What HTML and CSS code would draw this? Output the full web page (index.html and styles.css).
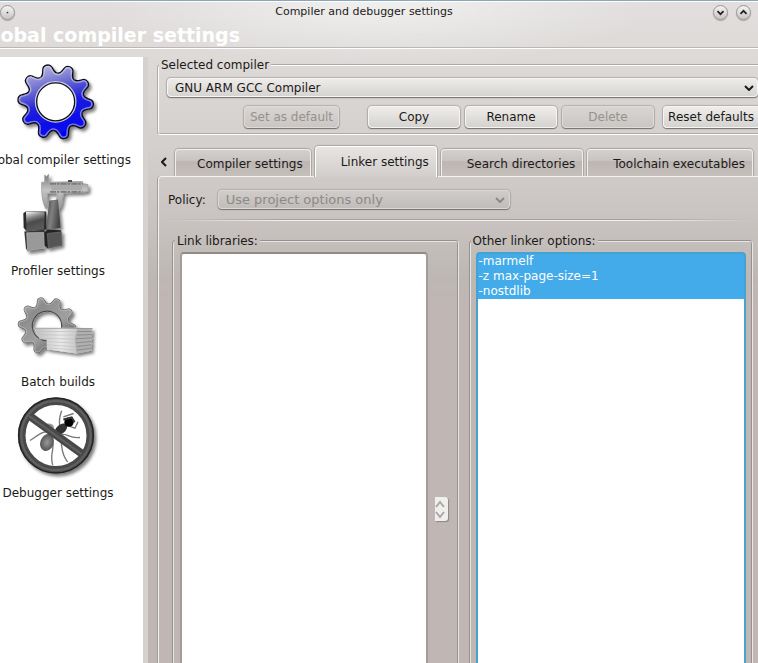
FILE: index.html
```html
<!DOCTYPE html>
<html lang="en">
<head>
<meta charset="utf-8">
<title>Compiler and debugger settings</title>
<link rel="stylesheet" href="styles.css">
</head>
<body>
<div class="window">
  <header class="header">
    <div class="titlebar">
      <button class="orb" aria-label="Window menu"><svg viewBox="0 0 15 15"><circle cx="7.500" cy="7.500" r="1" fill="#333"/></svg></button>
      <span class="title">Compiler and debugger settings</span>
      <div class="orbs">
        <button class="orb" aria-label="Minimize"><svg viewBox="0 0 15 15"><path d="M4 6 L7.500 9.500 L11 6"/></svg></button>
        <button class="orb" aria-label="Maximize"><svg viewBox="0 0 15 15"><path d="M4 9 L7.500 5.500 L11 9"/></svg></button>
      </div>
    </div>
    <h1 class="heading">Global compiler settings</h1>
  </header>

  <div class="body">
    <nav class="sidebar">
      <a class="category" href="#global">
        <svg viewBox="42 3 264 282" aria-hidden="true">
          <defs>
            <path id="tooth" d="M-26,-80 C-16,-83 -15,-93 -12,-103 C-9,-114 9,-114 12,-103 C15,-93 16,-83 26,-80"/>
            <path id="wedge" d="M0,0 L-26,-80 C-16,-83 -15,-93 -12,-103 C-9,-114 9,-114 12,-103 C15,-93 16,-83 26,-80 Z"/>
            <g id="rim">
              <use href="#tooth"/><use href="#tooth" transform="rotate(36)"/><use href="#tooth" transform="rotate(72)"/><use href="#tooth" transform="rotate(108)"/><use href="#tooth" transform="rotate(144)"/><use href="#tooth" transform="rotate(180)"/><use href="#tooth" transform="rotate(216)"/><use href="#tooth" transform="rotate(252)"/><use href="#tooth" transform="rotate(288)"/><use href="#tooth" transform="rotate(324)"/>
            </g>
            <clipPath id="gearShape">
              <circle r="79"/>
              <use href="#wedge"/><use href="#wedge" transform="rotate(36)"/><use href="#wedge" transform="rotate(72)"/><use href="#wedge" transform="rotate(108)"/><use href="#wedge" transform="rotate(144)"/><use href="#wedge" transform="rotate(180)"/><use href="#wedge" transform="rotate(216)"/><use href="#wedge" transform="rotate(252)"/><use href="#wedge" transform="rotate(288)"/><use href="#wedge" transform="rotate(324)"/>
            </clipPath>
            <linearGradient id="blue" x1="0.300" y1="0" x2="0.600" y2="1">
              <stop offset="0.050" stop-color="#b4b4e0"/><stop offset="0.300" stop-color="#6c6cd0"/><stop offset="0.550" stop-color="#1c1cdc"/><stop offset="1" stop-color="#0000f4"/>
            </linearGradient>
            <linearGradient id="steel" x1="0" y1="0" x2="0.800" y2="1">
              <stop offset="0" stop-color="#c4c4c4"/><stop offset="0.300" stop-color="#8c8c8c"/><stop offset="0.600" stop-color="#a0a0a0"/><stop offset="1" stop-color="#4c4c4c"/>
            </linearGradient>
            <filter id="shadow" x="-20%" y="-20%" width="150%" height="150%">
              <feDropShadow dx="7" dy="8" stdDeviation="4" flood-color="#000" flood-opacity="0.500"/>
            </filter>
          </defs>
          <g filter="url(#shadow)">
            <g transform="translate(167 136) rotate(-14)">
              <use href="#rim" fill="none" stroke="#111" stroke-width="8"/>
              <g clip-path="url(#gearShape)">
                <rect x="-115" y="-115" width="230" height="230" fill="url(#blue)" transform="rotate(14)"/>
                <use href="#rim" fill="none" stroke="#e4e4fa" stroke-width="9" opacity="0.500"/>
              </g>
            </g>
          </g>
          <circle cx="167" cy="136" r="59" fill="#fff" stroke="#c9c9f6" stroke-width="7"/>
          <circle cx="167" cy="136" r="57" fill="#fff" stroke="#111" stroke-width="4"/>
        </svg>
        <span>Global compiler settings</span>
      </a>
      <a class="category" href="#profiler">
        <svg viewBox="42 9 264 282" aria-hidden="true">
          <defs>
            <linearGradient id="caliper" x1="0" y1="0" x2="0" y2="1"><stop offset="0" stop-color="#777"/><stop offset="0.450" stop-color="#c4c4c4"/><stop offset="1" stop-color="#969696"/></linearGradient>
            <linearGradient id="cubeA" x1="0" y1="0" x2="0.300" y2="1"><stop offset="0" stop-color="#fff"/><stop offset="0.350" stop-color="#888"/><stop offset="0.600" stop-color="#4c4c4c"/><stop offset="1" stop-color="#5a5a5a"/></linearGradient>
            <linearGradient id="cone" x1="0" y1="0" x2="1" y2="0.300"><stop offset="0" stop-color="#444"/><stop offset="0.500" stop-color="#808080"/><stop offset="1" stop-color="#444"/></linearGradient>
          </defs>
          <g filter="url(#shadow)">
            <path d="M134,50 L134,28 L139,34 L146,26 L146,50 L247,48 L249,55 L264,57 L264,77 L249,80 L192,82 C185,100 188,120 176,132 L169,128 L171,84 L142,84 L143,128 L138,130 C126,110 124,80 125,50 Z" fill="url(#caliper)" stroke="#999" stroke-width="2"/>
            <path d="M150,55 H248 M150,79 H248" stroke="#7c7c7c" stroke-width="5" stroke-dasharray="18 3 7 4"/>
            <path d="M154,67 H245" stroke="#aaa" stroke-width="16"/>
            <path d="M204,44 h12 v5 h-12z" fill="#333"/>
            <path d="M148,105 L174,102 L182,187 L137,195 Z" fill="url(#cone)"/>
            <path d="M70,143 L77,138 H139 V192 L78,196 L71,186 Z" fill="#292929"/>
            <path d="M78,139 L134,140 L132,192 L79,195 Z" fill="url(#cubeA)"/>
            <path d="M73,198 L133,193 L135,202 L131,251 L83,257 L78,249 Z" fill="#343434"/>
            <path d="M80,202 L131,201 V249 L83,256 Z" fill="#999" stroke="#bbb" stroke-width="2"/>
            <path d="M134,200 L143,192 L183,194 L186,239 L143,249 L134,240 Z" fill="#242424"/>
            <path d="M142,204 L185,199 L184,238 L145,248 Z" fill="#555" stroke="#707070" stroke-width="2"/>
          </g>
        </svg>
        <span>Profiler settings</span>
      </a>
      <a class="category" href="#batch">
        <svg viewBox="42 -19 264 282" aria-hidden="true">
          <defs>
            <linearGradient id="paper" x1="0" y1="0" x2="1" y2="0"><stop offset="0" stop-color="#bdbdbd"/><stop offset="0.600" stop-color="#e8e8e8"/><stop offset="1" stop-color="#c4c4c4"/></linearGradient>
            <mask id="ring" maskUnits="userSpaceOnUse" x="-130" y="-130" width="270" height="270"><rect x="-130" y="-130" width="270" height="270" fill="#fff"/><circle r="55" fill="#000"/></mask>
            <clipPath id="gearCut"><path d="M30,20 H250 V126 H140 V210 H30 Z"/></clipPath>
          </defs>
          <g filter="url(#shadow)">
            <g clip-path="url(#gearCut)">
              <g transform="translate(141 120) scale(0.770) rotate(-14)" mask="url(#ring)">
                <use href="#rim" fill="none" stroke="#666" stroke-width="6"/>
                <g clip-path="url(#gearShape)">
                  <rect x="-115" y="-115" width="230" height="230" fill="url(#steel)" transform="rotate(14)"/>
                  <use href="#rim" fill="none" stroke="#ddd" stroke-width="8" opacity="0.400"/>
                </g>
                <circle r="57" fill="none" stroke="#4a4a4a" stroke-width="5"/>
              </g>
            </g>
            <path d="M104,127 L235,126 L230,203 L141,190 L140,161 L119,160 Z" fill="url(#paper)"/>
            <path d="M232,126 L278,128 L274,136 L278,142 L274,150 L277,158 L273,166 L277,174 L273,182 L275,194 L230,203 L224,160 Z" fill="#b0b0b0"/>
            <path d="M108,137 H226 M113,147 L226,148 M118,157 L226,160 M142,167 L226,172 M142,177 L228,183 M142,186 L228,193" stroke="#c0c0c0" stroke-width="2" fill="none"/>
            <path d="M232,137 H276 M230,148 L276,146 M228,159 L276,156 M228,171 L275,167 M230,182 L275,177 M230,193 L275,187" stroke="#8c8c8c" stroke-width="3" fill="none"/>
            <path d="M104,127 L278,128" stroke="#888" stroke-width="2"/>
          </g>
        </svg>
        <span>Batch builds</span>
      </a>
      <a class="category" href="#debugger">
        <svg viewBox="42 -1 264 282" aria-hidden="true">
          <defs>
            <filter id="soft"><feGaussianBlur stdDeviation="2"/></filter>
            <radialGradient id="abdomen"><stop offset="0" stop-color="#999"/><stop offset="1" stop-color="#555"/></radialGradient>
          </defs>
          <circle cx="168" cy="134" r="103" fill="#fff" stroke="#484848" stroke-width="23" filter="url(#shadow)"/>
          <circle cx="168" cy="134" r="112" fill="none" stroke="#222" stroke-width="4"/>
          <circle cx="168" cy="134" r="104" fill="none" stroke="#606060" stroke-width="7" filter="url(#soft)"/>
          <g filter="url(#soft)">
            <g fill="none" stroke="#777" stroke-width="4">
              <path d="M160,120 C130,118 112,135 90,149 M158,150 C165,175 148,188 158,222 M180,140 C190,165 178,180 203,214 M186,130 C205,130 208,143 240,140 M180,110 C175,85 180,75 185,60 M190,78 L221,68 M205,105 L225,112 L234,93"/>
            </g>
            <ellipse cx="141" cy="155" rx="20" ry="26" fill="url(#abdomen)" transform="rotate(20 141 155)"/>
            <ellipse cx="145" cy="109" rx="17" ry="11" fill="#999"/>
            <ellipse cx="183" cy="115" rx="22" ry="13" fill="#333" transform="rotate(-40 183 115)"/>
            <circle cx="207" cy="94" r="14" fill="#050505"/>
            <path d="M190,86 L215,80 L224,94" fill="none" stroke="#333" stroke-width="6"/>
          </g>
          <path d="M90,76 L246,189" stroke="#484848" stroke-width="24"/>
          <path d="M88,76 L244,189" stroke="#606060" stroke-width="7" filter="url(#soft)"/>
        </svg>
        <span>Debugger settings</span>
      </a>
    </nav>

    <main class="content">
      <fieldset class="group compiler">
        <legend>Selected compiler</legend>
        <div class="combo">
          <select aria-label="Selected compiler"><option>GNU ARM GCC Compiler</option></select>
          <svg viewBox="0 0 10 6" aria-hidden="true"><path d="M1 1 L5 5 L9 1"/></svg>
        </div>
        <div class="actions">
          <button class="button wide" disabled>Set as default</button>
          <button class="button spaced">Copy</button>
          <button class="button">Rename</button>
          <button class="button" disabled>Delete</button>
          <button class="button wide last">Reset defaults</button>
        </div>
      </fieldset>

      <div class="tabs" role="tablist">
        <button class="scroll" aria-label="Scroll tabs left"><svg viewBox="0 0 6 10"><path d="M5 1 L1 5 L5 9"/></svg></button>
        <button class="tab first" role="tab">Compiler settings</button>
        <button class="tab active" role="tab" aria-selected="true">Linker settings</button>
        <button class="tab" role="tab">Search directories</button>
        <button class="tab" role="tab">Toolchain executables</button>
      </div>

      <section class="pane">
        <div class="policy">
          <label for="policy">Policy:</label>
          <div class="combo disabled">
            <select id="policy" disabled><option>Use project options only</option></select>
            <svg viewBox="0 0 10 6" aria-hidden="true"><path d="M1 1 L5 5 L9 1"/></svg>
          </div>
        </div>
        <hr class="rule">
        <div class="columns">
          <fieldset class="group libraries">
            <legend>Link libraries:</legend>
            <div class="listrow">
              <select class="field" multiple aria-label="Link libraries"></select>
              <button class="stepper" aria-label="Move library up or down"><svg viewBox="0 0 12 24"><path d="M1 10 L5 5 L9 10 M1 15 L5 20 L9 15"/></svg></button>
            </div>
          </fieldset>
          <fieldset class="group options">
            <legend>Other linker options:</legend>
            <textarea class="field focused" spellcheck="false" aria-label="Other linker options">-marmelf
-z max-page-size=1
-nostdlib</textarea>
          </fieldset>
        </div>
      </section>
    </main>
  </div>
</div>
</body>
</html>
```
FILE: styles.css
```css
* { box-sizing: border-box; }

body {
  margin: 0;
  font: 12px/16px "DejaVu Sans", sans-serif;
  color: #1c1a19;
}

button, select, textarea { font: inherit; color: inherit; }

.window {
  display: flex;
  flex-direction: column;
  height: 100vh;
  overflow: hidden;
  border-top: 1px solid #8aa7ba;
  background:
    radial-gradient(ellipse 280px 64px at 50% 0, #f0f0ef, rgba(240, 240, 239, 0)),
    linear-gradient(#e1dedd, #dcd9d7 64px, #d3cfcc 150px, #c8c3c0 220px, #bdb7b3 280px, #c0b6b3 300px);
}

.header {
  height: 48px;
  border-top: 1px solid #fff;
  border-bottom: 1px solid #fff;
  box-shadow: inset 0 -1px #bcb6b4;
}

.titlebar {
  display: flex;
  align-items: center;
  justify-content: space-between;
  height: 20px;
  padding-right: 7px;
  font-size: 11px;
}

.title { flex: 1; text-align: center; }

.orbs { display: flex; gap: 8px; }

.orb {
  width: 15px;
  height: 15px;
  padding: 0;
  border: 1px solid #999593;
  border-radius: 50%;
  background: linear-gradient(#f5f4f3, #c8c5c3);
  box-shadow: 0 1px 1px #aaa5a3;
}

svg { display: block; }

.orb svg { width: 13px; height: 13px; }

.orb path { fill: none; stroke: #222; stroke-width: 2; }

.heading {
  display: flex;
  justify-content: flex-end;
  width: 240px;
  margin: 0;
  font-size: 19px;
  line-height: 26px;
  color: #fff;
  white-space: nowrap;
}

.body { display: flex; flex: 1; min-height: 0; padding-top: 8px; }

.sidebar {
  flex: none;
  width: 148px;
  padding-right: 27px;
  border-right: 5px solid #d4d1ce;
  background: #fff;
}

.category {
  display: flex;
  flex-direction: column;
  align-items: center;
  color: inherit;
  text-decoration: none;
  white-space: nowrap;
}

.category svg { width: 88px; height: 95px; }

.content {
  display: flex;
  flex: 1;
  flex-direction: column;
  min-width: 0;
  padding-left: 9px;
}

.group {
  min-width: 0;
  margin: 0;
  border: 2px groove #fff;
  border-radius: 4px;
}

.group legend { margin-left: -5px; padding: 0 2px; }

.compiler { padding: 5px 0 5px 8px; border-right: 0; border-radius: 4px 0 0 4px; }

.compiler legend { margin-left: -8px; }

.combo { position: relative; }

.combo select {
  display: block;
  width: 100%;
  height: 19px;
  padding: 0 7px;
  appearance: none;
  border: 1px solid #f6f5f4;
  border-radius: 4px;
  outline: 0;
  background: linear-gradient(#edecea, #d6d4d1);
  box-shadow: 0 1px 1px #777371, 0 0 1px 1px #b5b0ae;
}

.combo svg { position: absolute; top: 7px; right: 4px; width: 10px; height: 6px; }

.combo path, .scroll path { fill: none; stroke: #1c1a19; stroke-width: 2; }

.combo.disabled select {
  font-size: 13px;
  color: #8d8986;
  opacity: 1;
  border-color: #dad7d5;
  background: linear-gradient(#cfccca, #c1bdba);
}

.combo.disabled svg { right: 5px; }

.combo.disabled path { stroke: #8d8986; }

.actions { display: flex; justify-content: flex-end; gap: 5px; padding-top: 9px; }

.button {
  width: 92px;
  height: 22px;
  padding: 0;
  border: 1px solid #f6f5f4;
  border-radius: 4px;
  background: linear-gradient(#eeedeb, #d5d3d0);
  box-shadow: 0 1px 1px #777371, 0 0 1px 1px #b5b0ae;
  white-space: nowrap;
}

.button:disabled { color: #96928f; border-color: #dedbd9; background: linear-gradient(#d8d5d3, #cac6c3); }

.button.wide { width: 95px; }

.button.spaced { margin-left: 24px; }

.button.last { margin-left: 4px; border-right: 0; border-radius: 4px 0 0 4px; }

.tabs { display: flex; align-items: flex-end; gap: 4px; height: 31px; margin: 11px 5px -1px 0; }

.scroll {
  align-self: center;
  width: 14px;
  height: 14px;
  padding: 2px 4px;
  border: 0;
  background: none;
}

.scroll svg { width: 6px; height: 10px; }

.tab {
  flex: 1 0 auto;
  height: 27px;
  margin-bottom: 1px;
  padding: 2px 7px 0 21px;
  border: 1px solid #f0eeed;
  border-bottom: 0;
  border-radius: 4px 4px 0 0;
  background: linear-gradient(#d3d0cd, #c8c4c1 40%, #bdb6b3 45%, #c5bfbc);
  box-shadow: 0 0 1px 1px #aaa5a3;
  text-align: right;
  white-space: nowrap;
  clip-path: inset(-2px -2px 0 -2px);
}

.tab.first { flex-grow: 0; }

.tab.active {
  position: relative;
  height: 31px;
  margin-bottom: 0;
  padding-top: 0;
  border-color: #fff;
  background: linear-gradient(#e7e5e3, #d1cdca);
}

.pane {
  display: flex;
  flex: 1;
  flex-direction: column;
  min-height: 0;
  margin-left: 1px;
  padding: 13px 5px 0 8px;
  border: solid #f5f3f2;
  border-width: 1px 0 0 1px;
  border-radius: 4px 0 0 0;
  box-shadow: -1px 0 #a29c99;
}

.policy { display: flex; align-items: center; gap: 12px; padding-left: 1px; }

.policy .combo { width: 292px; }

.rule {
  width: 100%;
  height: 2px;
  margin: 10px 0 0;
  border: 0;
  background:
    linear-gradient(90deg, transparent, #a7a19e 20%, #a7a19e 80%, transparent) top / 100% 1px no-repeat,
    linear-gradient(90deg, transparent, #f3f1f0 20%, #f3f1f0 80%, transparent) bottom / 100% 1px no-repeat;
}

.columns { display: flex; flex: 1; gap: 10px; min-height: 0; padding: 12px 0 0 5px; }

.columns .group {
  flex: 1;
  height: 100%;
  padding: 3px 5px 0;
  border-bottom: 0;
  border-color: #e8e5e3;
  border-radius: 4px 4px 0 0;
}

.columns .libraries { padding: 3px 6px 0; }

.listrow { display: flex; align-items: center; gap: 7px; height: 100%; }

.field {
  display: block;
  width: 100%;
  min-width: 0;
  height: 100%;
  margin: 0;
  padding: 0 1px;
  border: 2px solid #a39c99;
  border-top-color: #918a87;
  border-bottom: 0;
  border-radius: 4px 4px 0 0;
  outline: 0;
  background: #fff;
  resize: none;
}

.listrow .field { flex: 1; }

.field.focused {
  border-color: #45a2d3;
  color: #fff;
  line-height: 15px;
  background: linear-gradient(#43abe9, #43abe9) top left / 100% 45px no-repeat #fff;
}

.stepper {
  flex: none;
  width: 13px;
  height: 24px;
  margin: 102px 3px 0 0;
  padding: 0;
  border: 0;
  border-radius: 0 3px 3px 0;
  background: #f0efee;
  box-shadow: 1px 1px 1px #8c8683;
}

.stepper svg { width: 12px; height: 24px; }

.stepper path { fill: none; stroke: #aaa6a4; stroke-width: 2; }
```
